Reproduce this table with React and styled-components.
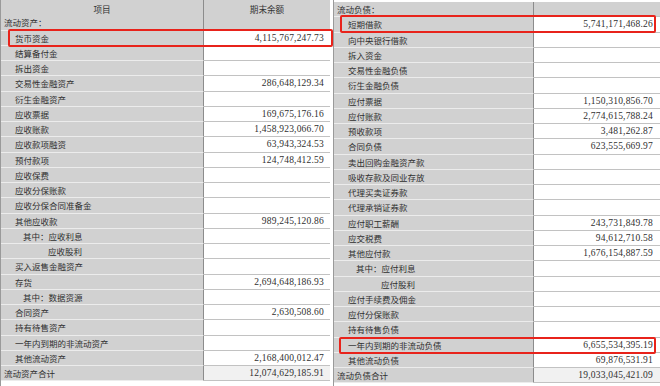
import React from "react";
import styled, { createGlobalStyle } from "styled-components";

const GlobalStyle = createGlobalStyle`
  html, body {
    margin: 0;
    padding: 0;
    background: #ffffff;
    overflow: hidden;
  }
`;

const Page = styled.div`
  display: flex;
  gap: 3px;
  width: 660px;
  height: 386px;
  background: #ffffff;
`;

const Table = styled.div`
  display: grid;
  grid-template-columns: ${(p) => p.labelWidth}px 1fr;
  grid-auto-rows: 15.25px;
  width: ${(p) => p.width}px;
  padding-top: ${(p) => p.top}px;
  align-content: start;
  border-left: 1px solid #9a9a9a;
  box-sizing: border-box;
`;

const Row = styled.div`
  display: contents;
`;

const HeadCell = styled.div`
  height: 18px;
  display: flex;
  align-items: center;
  justify-content: center;
  background: #d1d1d1;
  border-bottom: 1px solid #b4b4b4;
  border-right: ${(p) => (p.first ? "1px solid #8c8c8c" : "none")};
  font-family: "Noto Sans CJK SC", sans-serif;
  font-size: 8.6px;
  color: #333333;
  box-sizing: border-box;
`;

const Label = styled.div`
  position: relative;
  display: flex;
  align-items: center;
  padding-left: ${(p) => [3, 14, 22, 47][p.level]}px;
  background: #d1d1d1;
  border-bottom: 1px solid #ececec;
  border-right: 1px solid #8c8c8c;
  font-family: "Noto Sans CJK SC", sans-serif;
  font-size: 8.5px;
  color: #2f2f2f;
  white-space: nowrap;
  box-sizing: border-box;
`;

const Value = styled.div`
  position: relative;
  display: flex;
  align-items: center;
  justify-content: flex-end;
  padding-right: ${(p) => p.pad}px;
  background: ${(p) => (p.grey ? "#d1d1d1" : p.total ? "#f1f1f1" : "#ffffff")};
  border-bottom: 1px solid #c2c2c2;
  font-family: "Liberation Serif", serif;
  font-size: 9.5px;
  letter-spacing: 0.2px;
  color: #2f2f2f;
  white-space: nowrap;
  box-sizing: border-box;
`;

const Mark = styled.div`
  position: absolute;
  z-index: 2;
  left: ${(p) => p.box[0]}px;
  right: ${(p) => p.box[1]}px;
  top: ${(p) => p.box[2]}px;
  bottom: ${(p) => p.box[3]}px;
  border: 2.5px solid #e8231b;
  border-radius: 2px;
  pointer-events: none;
`;

const RowWrap = styled.div`
  position: relative;
  grid-column: 1 / -1;
  display: grid;
  grid-template-columns: subgrid;
`;

const assets = [
  { t: "流动资产：", l: 0, grey: true },
  { t: "货币资金", l: 1, v: "4,115,767,247.73", box: [7, -3, -2, -1] },
  { t: "结算备付金", l: 1 },
  { t: "拆出资金", l: 1 },
  { t: "交易性金融资产", l: 1, v: "286,648,129.34" },
  { t: "衍生金融资产", l: 1 },
  { t: "应收票据", l: 1, v: "169,675,176.16" },
  { t: "应收账款", l: 1, v: "1,458,923,066.70" },
  { t: "应收款项融资", l: 1, v: "63,943,324.53" },
  { t: "预付款项", l: 1, v: "124,748,412.59" },
  { t: "应收保费", l: 1 },
  { t: "应收分保账款", l: 1 },
  { t: "应收分保合同准备金", l: 1 },
  { t: "其他应收款", l: 1, v: "989,245,120.86" },
  { t: "其中：应收利息", l: 2 },
  { t: "应收股利", l: 3 },
  { t: "买入返售金融资产", l: 1 },
  { t: "存货", l: 1, v: "2,694,648,186.93" },
  { t: "其中：数据资源", l: 2 },
  { t: "合同资产", l: 1, v: "2,630,508.60" },
  { t: "持有待售资产", l: 1 },
  { t: "一年内到期的非流动资产", l: 1 },
  { t: "其他流动资产", l: 1, v: "2,168,400,012.47" },
  { t: "流动资产合计", l: 0, v: "12,074,629,185.91", total: true },
];

const liabilities = [
  { t: "流动负债：", l: 0, grey: true },
  { t: "短期借款", l: 1, v: "5,741,171,468.26", box: [6, 4, -2, 0] },
  { t: "向中央银行借款", l: 1 },
  { t: "拆入资金", l: 1 },
  { t: "交易性金融负债", l: 1 },
  { t: "衍生金融负债", l: 1 },
  { t: "应付票据", l: 1, v: "1,150,310,856.70" },
  { t: "应付账款", l: 1, v: "2,774,615,788.24" },
  { t: "预收款项", l: 1, v: "3,481,262.87" },
  { t: "合同负债", l: 1, v: "623,555,669.97" },
  { t: "卖出回购金融资产款", l: 1 },
  { t: "吸收存款及同业存放", l: 1 },
  { t: "代理买卖证券款", l: 1 },
  { t: "代理承销证券款", l: 1 },
  { t: "应付职工薪酬", l: 1, v: "243,731,849.78" },
  { t: "应交税费", l: 1, v: "94,612,710.58" },
  { t: "其他应付款", l: 1, v: "1,676,154,887.59" },
  { t: "其中：应付利息", l: 2 },
  { t: "应付股利", l: 3 },
  { t: "应付手续费及佣金", l: 1 },
  { t: "应付分保账款", l: 1 },
  { t: "持有待售负债", l: 1 },
  { t: "一年内到期的非流动负债", l: 1, v: "6,655,534,395.19", box: [5, 4, -1, -1] },
  { t: "其他流动负债", l: 1, v: "69,876,531.91" },
  { t: "流动负债合计", l: 0, v: "19,033,045,421.09", total: true },
];

const Lines = ({ rows, pad }) =>
  rows.map((r) => (
    <RowWrap key={r.t}>
      <Label level={r.l}>{r.t}</Label>
      <Value pad={pad} grey={r.grey} total={r.total}>
        {r.v}
      </Value>
      {r.box && <Mark box={r.box} />}
    </RowWrap>
  ));

const App = () => (
  <Page>
    <GlobalStyle />
    <Table width={330} labelWidth={203} top={0}>
      <Row>
        <HeadCell first>项目</HeadCell>
        <HeadCell>期末余额</HeadCell>
      </Row>
      <Lines rows={assets} pad={6} />
    </Table>
    <Table width={327} labelWidth={200} top={2}>
      <Lines rows={liabilities} pad={7} />
    </Table>
  </Page>
);

export default App;
